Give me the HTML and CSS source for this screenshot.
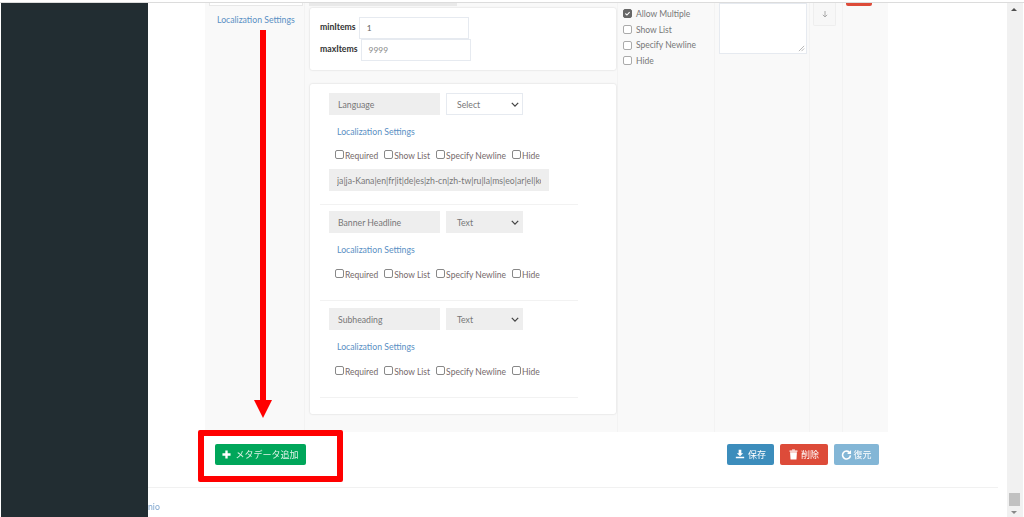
FILE: index.html
```html
<!DOCTYPE html>
<html lang="en">
<head>
<meta charset="utf-8">
<title>Metadata settings</title>
<link rel="stylesheet" href="styles.css">
</head>
<body>
<div class="page">
  <div class="top-edge"></div>
  <div class="shell">
    <aside class="sidebar"></aside>
    <main class="main">
      <section class="panel">
        <div class="col col-name">
          <div class="tab-stub"></div>
          <a class="link link-top">Localization Settings</a>
        </div>
        <div class="col col-schema">
          <div class="strip"></div>
          <div class="card card-limits">
            <div class="limit"><label class="limit-label">minItems</label><span class="input">1</span></div>
            <div class="limit"><label class="limit-label">maxItems</label><span class="input input-muted">9999</span></div>
          </div>
          <div class="card card-fields">
            <div class="field field-first">
              <div class="field-head">
                <span class="input input-name input-grey">Language</span>
                <span class="select">Select<svg class="chev" viewBox="0 0 10 6"><path d="M1 1l4 4 4-4" fill="none" stroke="#444" stroke-width="1.6"/></svg></span>
              </div>
              <a class="link link-field">Localization Settings</a>
              <div class="checks">
                <span class="check"><i class="box"></i>Required</span>
                <span class="check"><i class="box"></i>Show List</span>
                <span class="check"><i class="box"></i>Specify Newline</span>
                <span class="check"><i class="box"></i>Hide</span>
              </div>
              <div class="input input-langs input-grey"><span class="langs">ja|ja-Kana|en|fr|it|de|es|zh-cn|zh-tw|ru|la|ms|eo|ar|el|ko</span></div>
            </div>
            <div class="field">
              <div class="field-head">
                <span class="input input-name input-grey">Banner Headline</span>
                <span class="select select-grey">Text<svg class="chev" viewBox="0 0 10 6"><path d="M1 1l4 4 4-4" fill="none" stroke="#444" stroke-width="1.6"/></svg></span>
              </div>
              <a class="link link-field">Localization Settings</a>
              <div class="checks checks-loose">
                <span class="check"><i class="box"></i>Required</span>
                <span class="check"><i class="box"></i>Show List</span>
                <span class="check"><i class="box"></i>Specify Newline</span>
                <span class="check"><i class="box"></i>Hide</span>
              </div>
            </div>
            <div class="field field-last">
              <div class="field-head">
                <span class="input input-name input-grey">Subheading</span>
                <span class="select select-grey">Text<svg class="chev" viewBox="0 0 10 6"><path d="M1 1l4 4 4-4" fill="none" stroke="#444" stroke-width="1.6"/></svg></span>
              </div>
              <a class="link link-field">Localization Settings</a>
              <div class="checks checks-loose">
                <span class="check"><i class="box"></i>Required</span>
                <span class="check"><i class="box"></i>Show List</span>
                <span class="check"><i class="box"></i>Specify Newline</span>
                <span class="check"><i class="box"></i>Hide</span>
              </div>
            </div>
          </div>
        </div>
        <div class="col col-options">
          <span class="option"><i class="box box-on"><svg viewBox="0 0 10 10"><path d="M2 5l2.2 2.2L8 3" fill="none" stroke="#fff" stroke-width="1.6"/></svg></i>Allow Multiple</span>
          <span class="option"><i class="box"></i>Show List</span>
          <span class="option"><i class="box"></i>Specify Newline</span>
          <span class="option"><i class="box"></i>Hide</span>
        </div>
        <div class="col col-note">
          <div class="textarea"><svg class="grip" viewBox="0 0 8 8"><path d="M1 7l6-6M4 7l3-3" stroke="#999" stroke-width=".8"/></svg></div>
        </div>
        <div class="col col-order">
          <div class="order-btn"><svg viewBox="0 0 8 8"><path d="M4 1v6M1.8 4.8L4 7l2.2-2.2" fill="none" stroke="#aaa" stroke-width="1"/></svg></div>
        </div>
        <div class="col col-delete"><div class="delete-stub"></div></div>
      </section>

      <div class="actions">
        <button class="btn btn-add"><svg class="ico ico-plus" viewBox="0 0 10 10"><path d="M5 .5v9M.5 5h9" stroke="#fff" stroke-width="2.6"/></svg>メタデータ追加</button>
        <div class="action-group">
          <button class="btn btn-save"><svg class="ico" viewBox="0 0 12 12"><path d="M4.4 1h3.2v4h2.2L6 8.6 2.2 5h2.2zM1 9.4h10V11H1z" fill="#fff"/></svg>保存</button>
          <button class="btn btn-delete"><svg class="ico ico-tall" viewBox="0 0 10 12"><path d="M.6 1.6h8.8v1.4H.6zM3.4.4h3.2v1H3.4zM1.2 3.6h7.6l-.5 8H1.7z" fill="#fff"/></svg>削除</button>
          <button class="btn btn-restore"><svg class="ico ico-redo" viewBox="0 0 12 12"><path d="M9.6 4.2A4.3 4.3 0 1 0 10.3 7" fill="none" stroke="#fff" stroke-width="1.7"/><path d="M11 1v4.4H6.6z" fill="#fff"/></svg>復元</button>
        </div>
      </div>

      <footer class="footer"><a class="footer-link">nio</a></footer>
    </main>
    <div class="scrollbar">
      <span class="sb-arrow sb-up"></span>
      <span class="sb-thumb"></span>
      <span class="sb-arrow sb-down"></span>
    </div>
  </div>

  <svg class="callout-arrow" viewBox="0 0 18 388"><path d="M6 0h6v370h6l-9 18-9-18h6z" fill="#f00"/></svg>
  <div class="callout-box"></div>
</div>
</body>
</html>
```
FILE: styles.css
```css
* { box-sizing: border-box; }
html, body { margin: 0; height: 517px; overflow: hidden; background: #fff; }
body { font-family: Lato, "Noto Sans CJK JP", sans-serif; font-size: 8.7px; color: #555; }
.page { position: relative; width: 1024px; height: 517px; filter: blur(.45px); }
.top-edge { height: 3px; border-bottom: 1px solid #dcdcdc; }
.shell { display: flex; height: 514px; }
.sidebar { width: 147px; margin-left: 1px; background: #222d32; flex: none; }
.main { width: 859px; flex: none; display: flex; flex-direction: column; }

.panel { display: flex; width: 683px; height: 429px; margin-left: 57px; background: #f9f9f9; flex: none; }
.col { flex: none; border-right: 1px solid #f3f3f3; }
.col-name { width: 100px; padding-left: 4px; }
.tab-stub { width: 94px; height: 3px; background: #fff; border: 1px solid #e8e8e8; border-top: 0; }
.link { color: #5a90c4; display: block; line-height: 12px; }
.link-top { margin: 8px 0 0 8px; }
.col-schema { width: 313px; padding-left: 5px; }
.strip { width: 148px; height: 3px; background: #e9e9e9; margin-left: -1px; }
.card { width: 306px; background: #fff; border-radius: 2px; box-shadow: 0 0 2px rgba(0,0,0,.18); }
.card-limits { height: 62px; margin-top: 2px; padding: 9px 0 0 10px; }
.limit { display: flex; align-items: flex-start; height: 22px; }
.limit-label { font-weight: 700; color: #333; line-height: 20px; margin-right: 3px; }
.input { display: block; width: 110px; height: 22px; line-height: 21px; padding-left: 7px; background: #fff; border: 1px solid #e6eaf0; color: #666; font-size: 8.4px; }
.input-muted { color: #888; }
.card-fields { height: 330px; margin-top: 14px; padding: 1px 38px 0 10px; }
.field { height: 96px; padding-top: 6px; border-bottom: 1px solid #f2f2f2; }
.field-first { height: 120px; padding-top: 8px; }
.field-last { height: 97px; padding-top: 7px; }
.field-head { display: flex; gap: 6px; margin-left: 9px; }
.input-grey { background: #eee; border-color: #eee; color: #777; font-size: 8.7px; }
.input-name { width: 111px; padding-left: 8px; }
.select { position: relative; display: block; width: 77px; height: 22px; line-height: 21px; padding-left: 10px; background: #fff; border: 1px solid #e6eaf0; color: #777; }
.select-grey { background: #eee; border-color: #eee; }
.chev { position: absolute; right: 3px; top: 8px; width: 8px; height: 5px; }
.link-field { margin: 11px 0 0 17px; }
.checks { display: flex; gap: 6px; margin: 12px 0 0 15px; height: 12px; line-height: 12px; color: #75696a; font-size: 8.5px; }
.checks-loose { margin-top: 13px; }
.check { display: flex; align-items: flex-start; white-space: nowrap; }
.box { display: block; flex: none; width: 9px; height: 9px; margin-right: 1px; border: 1px solid #888; border-radius: 2px; background: #fff; }
.input-langs { width: 220px; margin: 7px 0 0 9px; overflow: hidden; white-space: nowrap; }
.langs { display: block; width: 204px; overflow: hidden; }
.col-options { width: 97px; padding: 3px 0 0 5px; font-size: 8.5px; }
.option { display: flex; align-items: center; height: 15.7px; color: #777; white-space: nowrap; }
.option .box { margin-right: 4px; border-color: #aaa; }
.option .box-on { background: #666; border-color: #666; }
.box svg { display: block; width: 7px; height: 7px; }
.col-note { width: 95px; padding-left: 4px; }
.textarea { position: relative; width: 88px; height: 51px; background: #fff; border: 1px solid #e6eaf0; }
.grip { position: absolute; right: 1px; bottom: 1px; width: 7px; height: 7px; }
.col-order { width: 33px; padding-left: 3px; }
.order-btn { width: 23px; height: 23px; background: #f7f7f7; border: 1px solid #eee; border-top: 0; border-radius: 0 0 2px 2px; display: flex; align-items: center; justify-content: center; }
.order-btn svg { width: 8px; height: 8px; }
.col-delete { width: 45px; padding-left: 3px; border-right: 0; }
.delete-stub { width: 26px; height: 3px; background: #dd4b39; border-radius: 0 0 2px 2px; }

.actions { height: 55px; flex: none; display: flex; justify-content: space-between; align-items: flex-start; padding: 12px 128px 0 67px; }
.action-group { display: flex; gap: 6px; }
.btn { display: flex; align-items: center; justify-content: center; height: 21px; padding: 0 0 1px; border: 0; border-radius: 2px; color: #fff; font: inherit; font-size: 9px; font-family: "Noto Sans CJK JP", sans-serif; }
.ico { width: 10px; height: 10px; margin-right: 3px; flex: none; }
.ico-tall { width: 9px; height: 11px; }
.ico-redo { margin-right: 1px; width: 11px; height: 11px; }
.btn-add { width: 91px; background: #00a65a; color: #dff3e8; }
.ico-plus { width: 9px; height: 9px; margin-right: 4px; }
.btn-save { width: 47px; background: #3c8dbc; }
.btn-delete { width: 48px; background: #dd4b39; }
.btn-restore { width: 45px; background: #83b6d6; }
.footer { height: 30px; margin-right: 9px; border-top: 1px solid #f1f1f1; line-height: 37px; }
.footer-link { color: #7fa6cf; }

.scrollbar { position: relative; width: 16px; flex: none; background: #f1f1f1; }
.sb-thumb { position: absolute; left: 2px; top: 490px; width: 11px; height: 13px; background: #c1c1c1; }
.sb-arrow { position: absolute; left: 4px; width: 0; height: 0; border-left: 3px solid transparent; border-right: 3px solid transparent; }
.sb-up { top: 5px; border-bottom: 3px solid #505050; }
.sb-down { top: 508px; border-top: 3px solid #888; }

.callout-arrow { position: absolute; left: 254px; top: 30px; width: 18px; height: 388px; }
.callout-box { position: absolute; left: 198px; top: 430px; width: 145px; height: 52px; border: 6px solid #f00; border-radius: 2px; }
```
